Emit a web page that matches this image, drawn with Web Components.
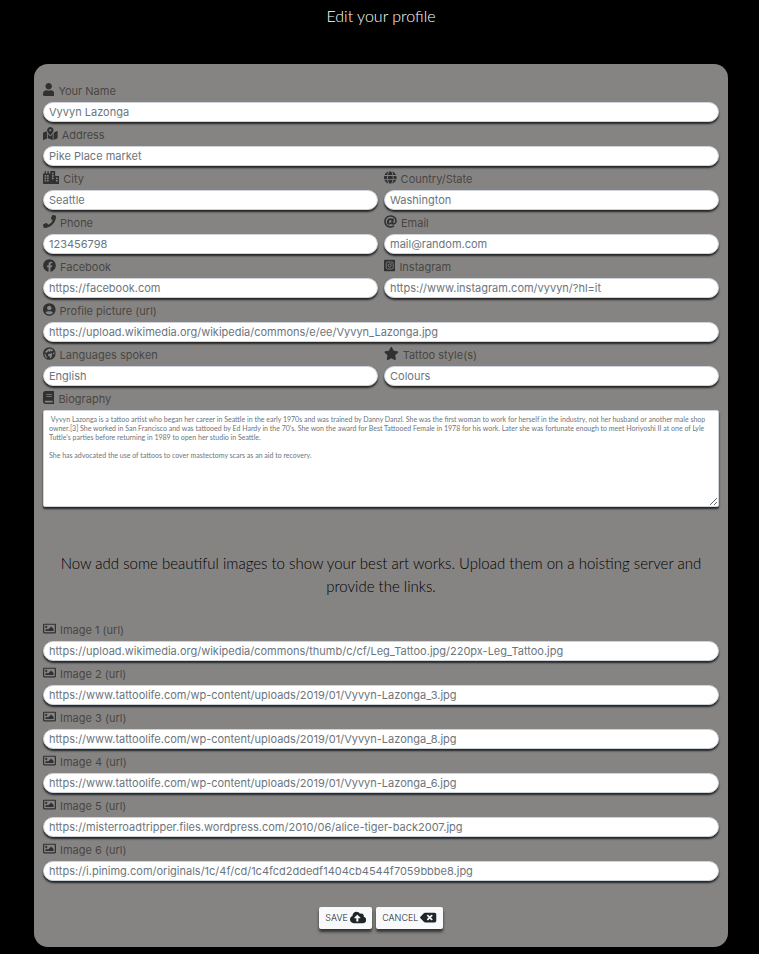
<!DOCTYPE html>
<html lang="en">
<head>
<meta charset="utf-8">
<meta name="viewport" content="width=device-width, initial-scale=1">
<title>Edit your profile</title>
<style>
body { margin: 0; background: #000; font: 11px/18px Inter, "Liberation Sans", sans-serif; }
</style>
</head>
<body>
<profile-page></profile-page>
<script>
const ICONS = {
  user: [448, '<path d="M224 256c70.700 0 128-57.300 128-128S294.700 0 224 0 96 57.300 96 128s57.300 128 128 128zm89.600 32h-16.700c-22.200 10.200-46.900 16-72.900 16s-50.600-5.800-72.900-16h-16.700C60.200 288 0 348.200 0 422.400V464c0 26.500 21.500 48 48 48h352c26.500 0 48-21.500 48-48v-41.600c0-74.200-60.200-134.400-134.400-134.400z"/>'],
  map: [576, '<path d="M288 0c-69.590 0-126 56.410-126 126 0 56.260 82.350 158.800 113.900 196.020 6.390 7.540 17.820 7.540 24.200 0C331.650 284.800 414 182.260 414 126 414 56.410 357.590 0 288 0zm0 168c-23.200 0-42-18.800-42-42s18.800-42 42-42 42 18.800 42 42-18.800 42-42 42zM20.120 215.950A32 32 0 0 0 0 245.660v250.320c0 11.320 11.430 19.060 21.940 14.860L160 448V214.920c-8.840-15.980-16.070-31.540-21.250-46.420L20.120 215.950zM288 359.670c-14.070 0-27.380-6.180-36.510-16.960-19.660-23.200-40.570-49.620-59.490-76.720v182l192 64V266c-18.920 27.090-39.820 53.520-59.490 76.720-9.130 10.770-22.440 16.950-36.510 16.950zm266.060-198.510L416 224v288l139.880-55.950A32 32 0 0 0 576 426.340V176.020c0-11.320-11.430-19.060-21.940-14.860z"/>'],
  city: [640, '<path fill-rule="evenodd" d="M616 192H480V24c0-13.300-10.700-24-24-24H312c-13.300 0-24 10.700-24 24v72h-64V16c0-8.800-7.200-16-16-16h-16c-8.800 0-16 7.200-16 16v80h-64V16c0-8.800-7.200-16-16-16H80c-8.800 0-16 7.200-16 16v80H24c-13.300 0-24 10.700-24 24v360c0 17.700 14.300 32 32 32h576c17.700 0 32-14.300 32-32V216c0-13.300-10.700-24-24-24zM64 160h64v64H64zm96 0h64v64h-64zM64 256h64v64H64zm96 0h64v64h-64zM64 352h64v64H64zm96 0h64v64h-64zM352 64h64v64h-64zm0 96h64v64h-64zm0 96h64v64h-64zm160 0h64v64h-64zm0 96h64v64h-64z"/>'],
  globe: [496, '<path d="M336.500 160C322 70.700 287.800 8 248 8s-74 62.700-88.500 152h177zM152 256c0 22.200 1.200 43.500 3.300 64h185.300c2.100-20.500 3.300-41.800 3.300-64s-1.200-43.500-3.300-64H155.300c-2.100 20.500-3.300 41.800-3.300 64zm324.700-96c-28.600-67.900-86.500-120.400-158-141.600 24.400 33.800 41.200 84.700 50 141.600h108zM177.200 18.400C105.800 39.600 47.800 92.100 19.300 160h108c8.700-56.900 25.500-107.800 49.900-141.600zM487.400 192H372.700c2.100 21 3.300 42.500 3.300 64s-1.200 43-3.300 64h114.600c5.500-20.500 8.600-41.800 8.600-64s-3.100-43.500-8.500-64zM120 256c0-21.500 1.200-43 3.300-64H8.600C3.200 212.500 0 233.800 0 256s3.200 43.500 8.600 64h114.600c-2-21-3.200-42.500-3.200-64zm39.500 96c14.500 89.300 48.700 152 88.500 152s74-62.700 88.500-152h-177zm159.300 141.600c71.400-21.200 129.400-73.700 158-141.600h-108c-8.800 56.900-25.600 107.800-50 141.600zM19.300 352c28.600 67.900 86.500 120.400 158 141.600-24.400-33.800-41.200-84.700-50-141.600h-108z"/>'],
  phone: [512, '<path d="M493.400 24.600l-104-24c-11.300-2.600-22.900 3.300-27.500 13.900l-48 112c-4.200 9.800-1.400 21.300 6.900 28l60.600 49.600c-36 76.700-98.900 140.500-177.200 177.200l-49.600-60.600c-6.800-8.300-18.200-11.100-28-6.900l-112 48C3.900 366.500-2 378.100.6 389.400l24 104C27.100 504.200 36.700 512 48 512c256.100 0 464-207.500 464-464 0-11.200-7.700-20.900-18.600-23.400z"/>'],
  at: [512, '<path d="M256 8C118.900 8 8 118.900 8 256c0 137.100 110.900 248 248 248 48.200 0 95.300-14.100 135.400-40.200 12-7.800 14.600-24.300 5.600-35.400l-10.200-12.400c-7.700-9.400-21.200-11.700-31.400-5.100C325.900 429.800 291.300 440 256 440c-101.500 0-184-82.500-184-184S154.500 72 256 72c100.100 0 184 57.600 184 160 0 38.800-21.100 79.700-58.200 83.700-17.300-.5-16.900-12.900-13.500-30l23.400-121.100C394.700 149.800 383.300 136 368.200 136h-45a13.500 13.500 0 0 0-13.400 12c-14.700-17.900-40.400-21.700-60-21.700-74.500 0-137.800 62.200-137.800 151.500 0 65.300 36.800 105.800 96 105.800 27 0 57.400-15.600 75-38.300 9.500 34.100 40.600 34.100 70.700 34.100C462.600 379.400 504 307.800 504 232 504 95.700 394 8 256 8zm-21.700 304.400c-22.200 0-36-15.600-36-40.700 0-45 30.700-72.800 58.600-72.800 22.300 0 35.600 15.300 35.600 40.800 0 45-33.900 72.700-58.200 72.700z"/>'],
  facebook: [512, '<path d="M504 256C504 119 393 8 256 8S8 119 8 256c0 123.780 90.690 226.380 209.250 245V327.690h-63V256h63v-54.640c0-62.150 37-96.480 93.670-96.480 27.140 0 55.520 4.840 55.520 4.840v61h-31.280c-30.800 0-40.410 19.120-40.410 38.730V256h68.780l-11 71.690h-57.780V501C413.310 482.380 504 379.780 504 256z"/>'],
  instagram: [448, '<rect y="32" width="448" height="448" rx="36"/><rect x="86" y="118" width="276" height="276" rx="62" fill="none" stroke="#868482" stroke-width="34"/><circle cx="224" cy="256" r="62" fill="none" stroke="#868482" stroke-width="34"/><circle cx="302" cy="180" r="18" fill="#868482"/>'],
  portrait: [496, '<path d="M248 8C111 8 0 119 0 256s111 248 248 248 248-111 248-248S385 8 248 8zm0 96c48.600 0 88 39.400 88 88s-39.400 88-88 88-88-39.400-88-88 39.400-88 88-88zm0 344c-58.700 0-111.300-26.600-146.500-68.200 18.800-35.400 55.600-59.800 98.500-59.800 2.400 0 4.800.4 7.100 1.100 13 4.200 26.600 6.900 40.900 6.900 14.300 0 28-2.700 40.900-6.900 2.300-.7 4.700-1.100 7.100-1.100 42.900 0 79.700 24.400 98.500 59.800C359.300 421.400 306.700 448 248 448z"/>'],
  europe: [496, '<circle cx="248" cy="256" r="248"/><path fill="#868482" d="M236 58l-34 26-36 12-28 40-38 26-12 38 24 22h42l16-22 30-12 22-28 28 34 18-4 8-22 30-8 34 20 22-8 12-26 40 2C376 92 312 56 236 58zM66 224c-24 98 20 188 100 222l-6-52-42-36-8-44zM246 262l-42 28-8 42 30 34 40 4 16 72 28-2 34-52 10-62 26-40-26-8-18-28zM400 226l-14 30 26 34 34-4c4-30 2-52-4-76z"/>'],
  star: [576, '<path d="M259.300 17.800L194 150.200 47.900 171.500c-26.200 3.800-36.700 36.100-17.700 54.600l105.700 103-25 145.500c-4.500 26.300 23.200 46 46.400 33.700L288 439.600l130.700 68.700c23.200 12.200 50.900-7.400 46.400-33.700l-25-145.500 105.700-103c19-18.500 8.500-50.800-17.700-54.600L382 150.200 316.700 17.800c-11.700-23.600-45.600-23.900-57.400 0z"/>'],
  book: [448, '<path d="M448 360V24c0-13.300-10.700-24-24-24H96C43 0 0 43 0 96v320c0 53 43 96 96 96h328c13.300 0 24-10.700 24-24v-16c0-7.500-3.500-14.300-8.900-18.700-4.200-15.400-4.200-59.300 0-74.700 5.400-4.300 8.900-11.100 8.900-18.600zM128 134c0-3.300 2.700-6 6-6h212c3.300 0 6 2.700 6 6v20c0 3.300-2.700 6-6 6H134c-3.300 0-6-2.700-6-6v-20zm0 64c0-3.300 2.700-6 6-6h212c3.300 0 6 2.700 6 6v20c0 3.300-2.700 6-6 6H134c-3.300 0-6-2.700-6-6v-20zm253.400 250H96c-17.700 0-32-14.300-32-32 0-17.600 14.400-32 32-32h285.400c-1.900 17.100-1.900 46.900 0 64z"/>'],
  image: [512, '<path d="M464 64H48C21.500 64 0 85.500 0 112v288c0 26.500 21.500 48 48 48h416c26.500 0 48-21.500 48-48V112c0-26.500-21.500-48-48-48zm-6 336H54a6 6 0 0 1-6-6V118a6 6 0 0 1 6-6h404a6 6 0 0 1 6 6v276a6 6 0 0 1-6 6zM128 152c-22 0-40 18-40 40s18 40 40 40 40-18 40-40-18-40-40-40zM96 352h320v-80l-87.500-87.500c-4.700-4.700-12.300-4.700-17 0L192 304l-39.500-39.500c-4.700-4.700-12.300-4.700-17 0L96 304v48z"/>'],
  upload: [640, '<path d="M537.600 226.600c4.100-10.700 6.400-22.400 6.400-34.600 0-53-43-96-96-96-19.700 0-38.100 6-53.300 16.200C367 64.200 315.300 32 256 32c-88.400 0-160 71.600-160 160 0 2.700.1 5.400.2 8.100C40.200 219.800 0 273.200 0 336c0 79.500 64.500 144 144 144h368c70.700 0 128-57.300 128-128 0-61.900-44-113.600-102.400-125.400zM393.400 288H328v112c0 8.800-7.200 16-16 16h-48c-8.800 0-16-7.200-16-16V288h-65.400c-14.300 0-21.400-17.200-11.300-27.300l105.400-105.400c6.200-6.200 16.400-6.200 22.600 0l105.400 105.400c10.100 10.100 2.900 27.300-11.300 27.300z"/>'],
  backspace: [640, '<path d="M576 64H205.300A64 64 0 0 0 160 82.700L9.400 233.400c-12.500 12.500-12.500 32.700 0 45.200L160 429.200c12 12 28.300 18.800 45.200 18.800H576c35.300 0 64-28.700 64-64V128c0-35.300-28.700-64-64-64zm-84.700 254.100c6.200 6.200 6.200 16.300 0 22.600l-22.600 22.600c-6.300 6.200-16.400 6.200-22.600 0L384 301.300l-62.100 62c-6.200 6.200-16.300 6.200-22.600 0l-22.600-22.600c-6.200-6.300-6.200-16.400 0-22.600l62-62.100-62-62.100c-6.200-6.200-6.200-16.300 0-22.600l22.600-22.600c6.300-6.200 16.400-6.200 22.600 0l62.100 62 62.100-62c6.200-6.200 16.300-6.200 22.600 0l22.600 22.600c6.200 6.300 6.200 16.400 0 22.600l-62 62.100 62 62.100z"/>']
};

const define = (name, render) => customElements.define(name, class extends HTMLElement {
  connectedCallback() {
    if (this.shadowRoot) return;
    this.attachShadow({ mode: 'open' }).innerHTML = render(this);
  }
});
const escapeText = s => s.replace(/&/g, '&amp;').replace(/</g, '&lt;').replace(/"/g, '&quot;');

define('fa-icon', el => {
  const [width, shapes] = ICONS[el.getAttribute('name')];
  return `<style>
    :host { display: block; flex: none; }
    svg { display: block; height: 13px; width: auto; fill: currentColor; }
  </style><svg viewBox="0 0 ${width} 512" aria-hidden="true">${shapes}</svg>`;
});

const labelStyle = `
  :host { display: block; min-width: 0; }
  label { display: flex; gap: 4px; height: 20px; color: #484644; }
  fa-icon { color: #303132; padding-top: 1px; }
  input, textarea {
    display: block; box-sizing: border-box; width: 100%; margin: 0; outline: 0;
    border: 1px solid #ced4da; background: #fff; color: #6c757d;
    box-shadow: 0 2px 2px #222426;
  }`;

define('text-field', el => `<style>${labelStyle}
    input { height: 20px; padding: 0 5px; border-radius: 10px; font: inherit; }
  </style>
  <label for="field"><fa-icon name="${el.getAttribute('icon')}"></fa-icon><slot></slot></label>
  <input id="field" type="text" value="${escapeText(el.getAttribute('value'))}">`);

define('text-area-field', el => `<style>${labelStyle}
    textarea { height: 97px; padding: 4px 5px; border-radius: 2px; resize: both;
      font: 7px/9px Lato, sans-serif; }
  </style>
  <label for="field"><fa-icon name="${el.getAttribute('icon')}"></fa-icon><slot></slot></label>
  <textarea id="field">${escapeText(el.getAttribute('value'))}</textarea>`);

define('action-button', el => `<style>
    :host { display: block; }
    button { display: flex; gap: 2px; align-items: center; height: 22px; padding: 0 6px; border: 0;
      border-radius: 2px; background: #f8f9fa; color: #212529; font: 300 9px/12px Inter, sans-serif;
      text-transform: uppercase; box-shadow: 0 3px 3px #333; cursor: pointer; }
    fa-icon { padding-bottom: 2px; }
  </style>
  <button type="button"><slot></slot><fa-icon name="${el.getAttribute('icon')}"></fa-icon></button>`);

define('field-grid', () => `<style>
    :host { display: grid; grid-template-columns: 1fr 1fr; gap: 4px 6px; }
    ::slotted([wide]) { grid-column: 1 / -1; }
  </style><slot></slot>`);

define('profile-card', () => `<style>
    :host { display: block; padding: 18px 9px; border-radius: 14px; background: #868482; }
  </style><slot></slot>`);

const images = [
  'https://upload.wikimedia.org/wikipedia/commons/thumb/c/cf/Leg_Tattoo.jpg/220px-Leg_Tattoo.jpg',
  'https://www.tattoolife.com/wp-content/uploads/2019/01/Vyvyn-Lazonga_3.jpg',
  'https://www.tattoolife.com/wp-content/uploads/2019/01/Vyvyn-Lazonga_8.jpg',
  'https://www.tattoolife.com/wp-content/uploads/2019/01/Vyvyn-Lazonga_6.jpg',
  'https://misterroadtripper.files.wordpress.com/2010/06/alice-tiger-back2007.jpg',
  'https://i.pinimg.com/originals/1c/4f/cd/1c4fcd2ddedf1404cb4544f7059bbbe8.jpg'
];
const biography = ` Vyvyn Lazonga is a tattoo artist who began her career in Seattle in the early 1970s and was trained by Danny Danzl. She was the first woman to work for herself in the industry, not her husband or another male shop owner.[3] She worked in San Francisco and was tattooed by Ed Hardy in the 70's. She won the award for Best Tattooed Female in 1978 for his work. Later she was fortunate enough to meet Horiyoshi II at one of Lyle Tuttle's parties before returning in 1989 to open her studio in Seattle.

She has advocated the use of tattoos to cover mastectomy scars as an aid to recovery.`;

define('profile-page', () => `<style>
    :host { display: block; padding: 0 31px 7px 34px; }
    h1, h2 { text-align: center; font-family: Lato, sans-serif; font-weight: 300; }
    h1 { margin: 0 0 32px; color: #fff; font-size: 16px; line-height: 32px; }
    h2 { margin: 45px 0 23px; color: #000; font-size: 15px; line-height: 23px; }
    .actions { display: flex; justify-content: center; gap: 4px; margin-top: 26px; }
  </style>
  <h1>Edit your profile</h1>
  <profile-card>
    <field-grid>
      <text-field wide icon="user" value="Vyvyn Lazonga">Your Name</text-field>
      <text-field wide icon="map" value="Pike Place market">Address</text-field>
      <text-field icon="city" value="Seattle">City</text-field>
      <text-field icon="globe" value="Washington">Country/State</text-field>
      <text-field icon="phone" value="123456798">Phone</text-field>
      <text-field icon="at" value="mail@random.com">Email</text-field>
      <text-field icon="facebook" value="https://facebook.com">Facebook</text-field>
      <text-field icon="instagram" value="https://www.instagram.com/vyvyn/?hl=it">Instagram</text-field>
      <text-field wide icon="portrait" value="https://upload.wikimedia.org/wikipedia/commons/e/ee/Vyvyn_Lazonga.jpg">Profile picture (url)</text-field>
      <text-field icon="europe" value="English">Languages spoken</text-field>
      <text-field icon="star" value="Colours">Tattoo style(s)</text-field>
      <text-area-field wide icon="book" value="${escapeText(biography)}">Biography</text-area-field>
    </field-grid>
    <h2>Now add some beautiful images to show your best art works. Upload them on a hoisting server and provide the links.</h2>
    <field-grid>
      ${images.map((url, i) => `<text-field wide icon="image" value="${url}">Image ${i + 1} (url)</text-field>`).join('')}
    </field-grid>
    <div class="actions">
      <action-button icon="upload">Save</action-button>
      <action-button icon="backspace">Cancel</action-button>
    </div>
  </profile-card>`);
</script>
</body>
</html>
